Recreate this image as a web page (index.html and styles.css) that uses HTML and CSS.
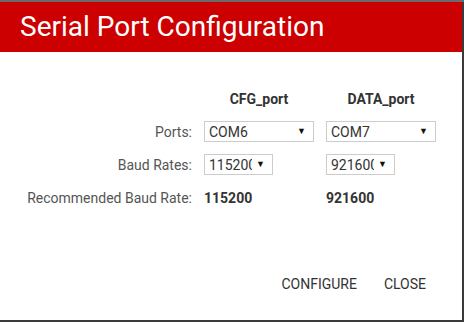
FILE: index.html
```html
<!DOCTYPE html>
<html lang="en">
<head>
    <meta charset="UTF-8">
    <meta name="viewport" content="width=device-width, initial-scale=1.0">
    <title>Serial Port Configuration</title>
    <link rel="stylesheet" href="styles.css">
</head>
<body>
    <div class="dialog">
        <div class="dialog-title">Serial Port Configuration</div>
        <div class="dialog-body">
            <!-- port settings table -->
            <div class="config-grid">
                <div></div>
                <div class="col-head">CFG_port</div>
                <div class="col-head">DATA_port</div>

                <div class="row-label">Ports:</div>
                <div class="select-wrap wide"><div class="select-clip"><select class="port-select"><option>COM6</option></select></div></div>
                <div class="select-wrap wide"><div class="select-clip"><select class="port-select"><option>COM7</option></select></div></div>

                <div class="row-label">Baud Rates:</div>
                <div class="select-wrap narrow"><div class="select-clip"><select class="port-select"><option>115200</option></select></div></div>
                <div class="select-wrap narrow"><div class="select-clip"><select class="port-select"><option>921600</option></select></div></div>

                <div class="row-label">Recommended Baud Rate:</div>
                <div class="rate">115200</div>
                <div class="rate">921600</div>
            </div>
        </div>
        <div class="dialog-actions">
            <button class="flat-btn">Configure</button>
            <button class="flat-btn">Close</button>
        </div>
    </div>
</body>
</html>
```

FILE: styles.css
```css
html, body {
    margin: 0;
    padding: 0;
    background-color: #3a3a3a;
    font-family: Roboto, "Liberation Sans", sans-serif;
}

body {
    border-top: 2px solid #6a6a6a;
    height: 320px;
    overflow: hidden;
}

.dialog {
    width: 462px;
    height: 318px;
    background-color: #ffffff;
    display: flex;
    flex-direction: column;
}

.dialog-title {
    background-color: #cc0000;
    color: #ffffff;
    font-size: 28px;
    height: 50px;
    line-height: 50px;
    padding-left: 20px;
}

.dialog-body {
    flex: 1;
}

.config-grid {
    display: grid;
    grid-template-columns: 192px 110px 110px;
    column-gap: 12px;
    grid-auto-rows: 33px;
    align-items: center;
    margin-top: 30px;
    font-size: 14px;
    color: #555555;
}

.col-head {
    text-align: center;
    font-weight: bold;
    color: #333333;
}

.row-label {
    text-align: right;
}

.select-wrap {
    position: relative;
    height: 21px;
    box-sizing: border-box;
    border: 1px solid #cccccc;
}

.select-wrap.wide {
    width: 110px;
}

.select-wrap.narrow {
    width: 69px;
}

.select-wrap::after {
    content: "\25BC";
    position: absolute;
    right: 7px;
    top: 4px;
    font-size: 9px;
    color: #111111;
    pointer-events: none;
}

.select-clip {
    width: calc(100% - 20px);
    height: 19px;
    overflow: hidden;
}

.port-select {
    -webkit-appearance: none;
    appearance: none;
    border: none;
    outline: none;
    background: transparent;
    width: 120px;
    height: 19px;
    padding: 0 0 0 4px;
    font-family: Roboto, "Liberation Sans", sans-serif;
    font-size: 14px;
    color: #333333;
}

.rate {
    font-weight: bold;
    color: #333333;
}

.dialog-actions {
    display: flex;
    justify-content: flex-end;
    gap: 11px;
    padding: 0 28px 22px 0;
}

.flat-btn {
    background: none;
    border: none;
    padding: 6px 8px;
    font-family: Roboto, "Liberation Sans", sans-serif;
    font-size: 14px;
    text-transform: uppercase;
    color: #333333;
    cursor: pointer;
}
```
